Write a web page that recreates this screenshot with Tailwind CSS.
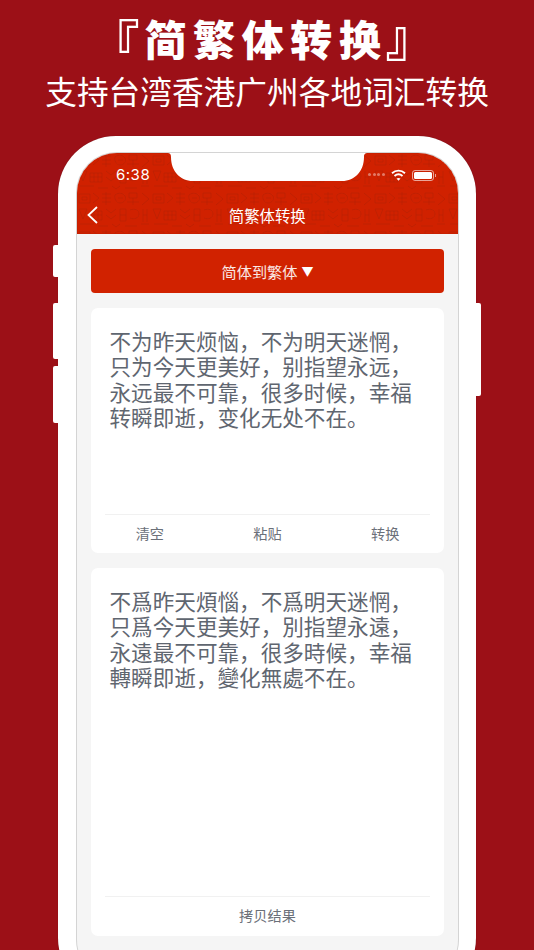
<!DOCTYPE html>
<html lang="zh">
<head>
    <meta charset="UTF-8">
    <meta name="viewport" content="width=device-width, initial-scale=1.0">
    <title>简繁体转换</title>
    <script src="https://cdn.jsdelivr.net/npm/@tailwindcss/browser@4"></script>
</head>
<body class="bg-[#9c1017] font-['Noto_Sans_CJK_SC',sans-serif]">
    <div class="h-[950px] w-[534px] overflow-hidden">
        <!-- headline -->
        <div class="h-[136px] pt-[8px] text-center text-white">
            <h1 class="flex h-[60px] items-center justify-center pr-[7px] text-[42px] leading-[60px] font-black tracking-[6.6px]">
                <span class="mr-[5px] translate-y-[2px] text-[50px] font-bold tracking-normal">『</span><span>简繁体转换</span><span class="-translate-x-[2px] -translate-y-[4px] text-[50px] font-bold tracking-normal">』</span>
            </h1>
            <p class="-mt-[1px] text-[31.7px] leading-[46px]">支持台湾香港广州各地词汇转换</p>
        </div>

        <!-- phone -->
        <div class="relative ml-[58px] h-[860px] w-[418px] rounded-[58px] bg-white pt-[17px] pl-[18.5px] shadow-[0_0_1px_#00000055]">
            <div class="absolute top-[109px] left-[-5px] h-[32px] w-[5px] rounded-l-[2px] bg-white"></div>
            <div class="absolute top-[167px] left-[-5px] h-[56px] w-[5px] rounded-l-[2px] bg-white"></div>
            <div class="absolute top-[230px] left-[-5px] h-[57px] w-[5px] rounded-l-[2px] bg-white"></div>
            <div class="absolute top-[167px] right-[-5px] h-[93px] w-[5px] rounded-r-[2px] bg-white"></div>

            <div class="relative h-[827px] w-[381.5px] overflow-hidden rounded-[40px] bg-[#f5f5f5] shadow-[0_0_0_1px_#d4d4d4]">
                <!-- nav with texture -->
                <div class="relative h-[81px] bg-[#d12200]">
                    <svg class="absolute inset-0" width="382" height="81" fill="none" stroke="#b51f03" stroke-width="0.9" opacity="0.7">
                        <defs>
                            <pattern id="tex" width="74" height="38" patternUnits="userSpaceOnUse">
                                <path d="M2 3h11v9H2zM5 6h5v3H5zM16 2l6 5-6 5M25 3h9M25 7h9M25 11h9M29 1v13M38 4c4-3 8-2 10 1s-1 7-5 7-6-5-5-8zM41 7h5M52 2h8v5h-8zM56 7v7M50 11h12M65 2l7 6-7 6M2 18h8l-4 10zM13 20h12v9H13zM17 20v9M21 20v9M13 24h12M29 18l5 4 5-4M29 24l5 4 5-4M43 18h6v12h-6zM43 24h6M53 19c5-2 9 0 9 4s-5 6-9 4M66 18v13M70 18v13M66 24h4M3 33h14M21 35h10M35 33l4 3 4-3M48 35h12M64 33h8"/>
                            </pattern>
                        </defs>
                        <rect width="382" height="81" fill="url(#tex)"/>
                    </svg>
                    <div class="absolute top-[14px] left-[39.5px] text-[15px] leading-[16px] font-normal tracking-[0.5px] text-white font-['Inter',sans-serif]">6:38</div>
                    <!-- signal dots, wifi, battery -->
                    <div class="absolute top-[20px] left-[291.500px] flex gap-[1.5px]">
                        <span class="h-[3px] w-[3px] rounded-full bg-white/40"></span>
                        <span class="h-[3px] w-[3px] rounded-full bg-white/40"></span>
                        <span class="h-[3px] w-[3px] rounded-full bg-white/40"></span>
                        <span class="h-[3px] w-[3px] rounded-full bg-white/40"></span>
                    </div>
                    <svg class="absolute top-[16px] left-[314.500px]" width="15" height="12" viewBox="0 0 15 12" fill="none" stroke="#fff" stroke-width="1.9">
                        <path d="M1 4.200c3.800-3.400 9.200-3.400 13 0"/>
                        <path d="M3.500 7c2.400-2.100 5.600-2.100 8 0"/>
                        <path d="M7.500 11.800 5.500 9.600c1.200-.9 2.800-.9 4 0z" fill="#fff" stroke="none"/>
                    </svg>
                    <div class="absolute top-[16.500px] left-[335.500px] h-[11px] w-[22px] rounded-[3px] border border-white/60 p-[1px]">
                        <div class="h-full w-full rounded-[1.5px] bg-white"></div>
                    </div>
                    <div class="absolute top-[20.500px] left-[358.500px] h-[3px] w-[1px] bg-white/60"></div>

                    <svg class="absolute top-[53px] left-[9.500px]" width="13" height="18" viewBox="0 0 13 18" fill="none" stroke="#fff" stroke-width="1.8">
                        <path d="M11 1 2.500 9l8.500 8"/>
                    </svg>
                    <div class="absolute inset-x-0 top-[50px] text-center text-[15.4px] leading-[24px] text-white">简繁体转换</div>
                </div>

                <!-- notch -->
                <svg class="absolute top-0 left-[90px]" width="201" height="29" viewBox="0 0 201 29" fill="#fff">
                    <path d="M0 0c3 0 4 1 4 4 0 14 9 24 22 24h149c13 0 22-10 22-24 0-3 1-4 4-4z"/>
                </svg>

                <div class="pt-[15px] pr-[14px] pl-[14.5px]">
                    <div class="flex h-[44px] items-center justify-center rounded-[4px] bg-[#d12200] text-[15.2px] text-white/90">简体到繁体<span class="ml-[4px] text-[12px] text-white">▼</span></div>

                    <!-- source -->
                    <div class="mt-[15px] flex h-[245px] flex-col rounded-[7px] bg-white">
                        <p class="flex-1 px-[18.500px] pt-[19.500px] text-[21.6px] leading-[25.6px] text-[#5f6670]">不为昨天烦恼，不为明天迷惘，<br>只为今天更美好，别指望永远，<br>永远最不可靠，很多时候，幸福<br>转瞬即逝，变化无处不在。</p>
                        <div class="mx-[14px] h-px bg-[#f1f1f1]"></div>
                        <div class="grid h-[38px] grid-cols-3 items-center pb-[1px] text-center text-[14.2px] text-[#6b7079]">
                            <span>清空</span>
                            <span>粘贴</span>
                            <span>转换</span>
                        </div>
                    </div>

                    <!-- result -->
                    <div class="mt-[15px] flex h-[368px] flex-col rounded-[7px] bg-white">
                        <p class="flex-1 px-[18.500px] pt-[19.500px] text-[21.6px] leading-[25.6px] text-[#5f6670]">不爲昨天煩惱，不爲明天迷惘，<br>只爲今天更美好，別指望永遠，<br>永遠最不可靠，很多時候，幸福<br>轉瞬即逝，變化無處不在。</p>
                        <div class="mx-[14px] h-px bg-[#f1f1f1]"></div>
                        <div class="flex h-[39px] items-center justify-center pb-[1px] text-[14.2px] text-[#6b7079]">拷贝结果</div>
                    </div>
                </div>
            </div>
        </div>
    </div>
</body>
</html>
